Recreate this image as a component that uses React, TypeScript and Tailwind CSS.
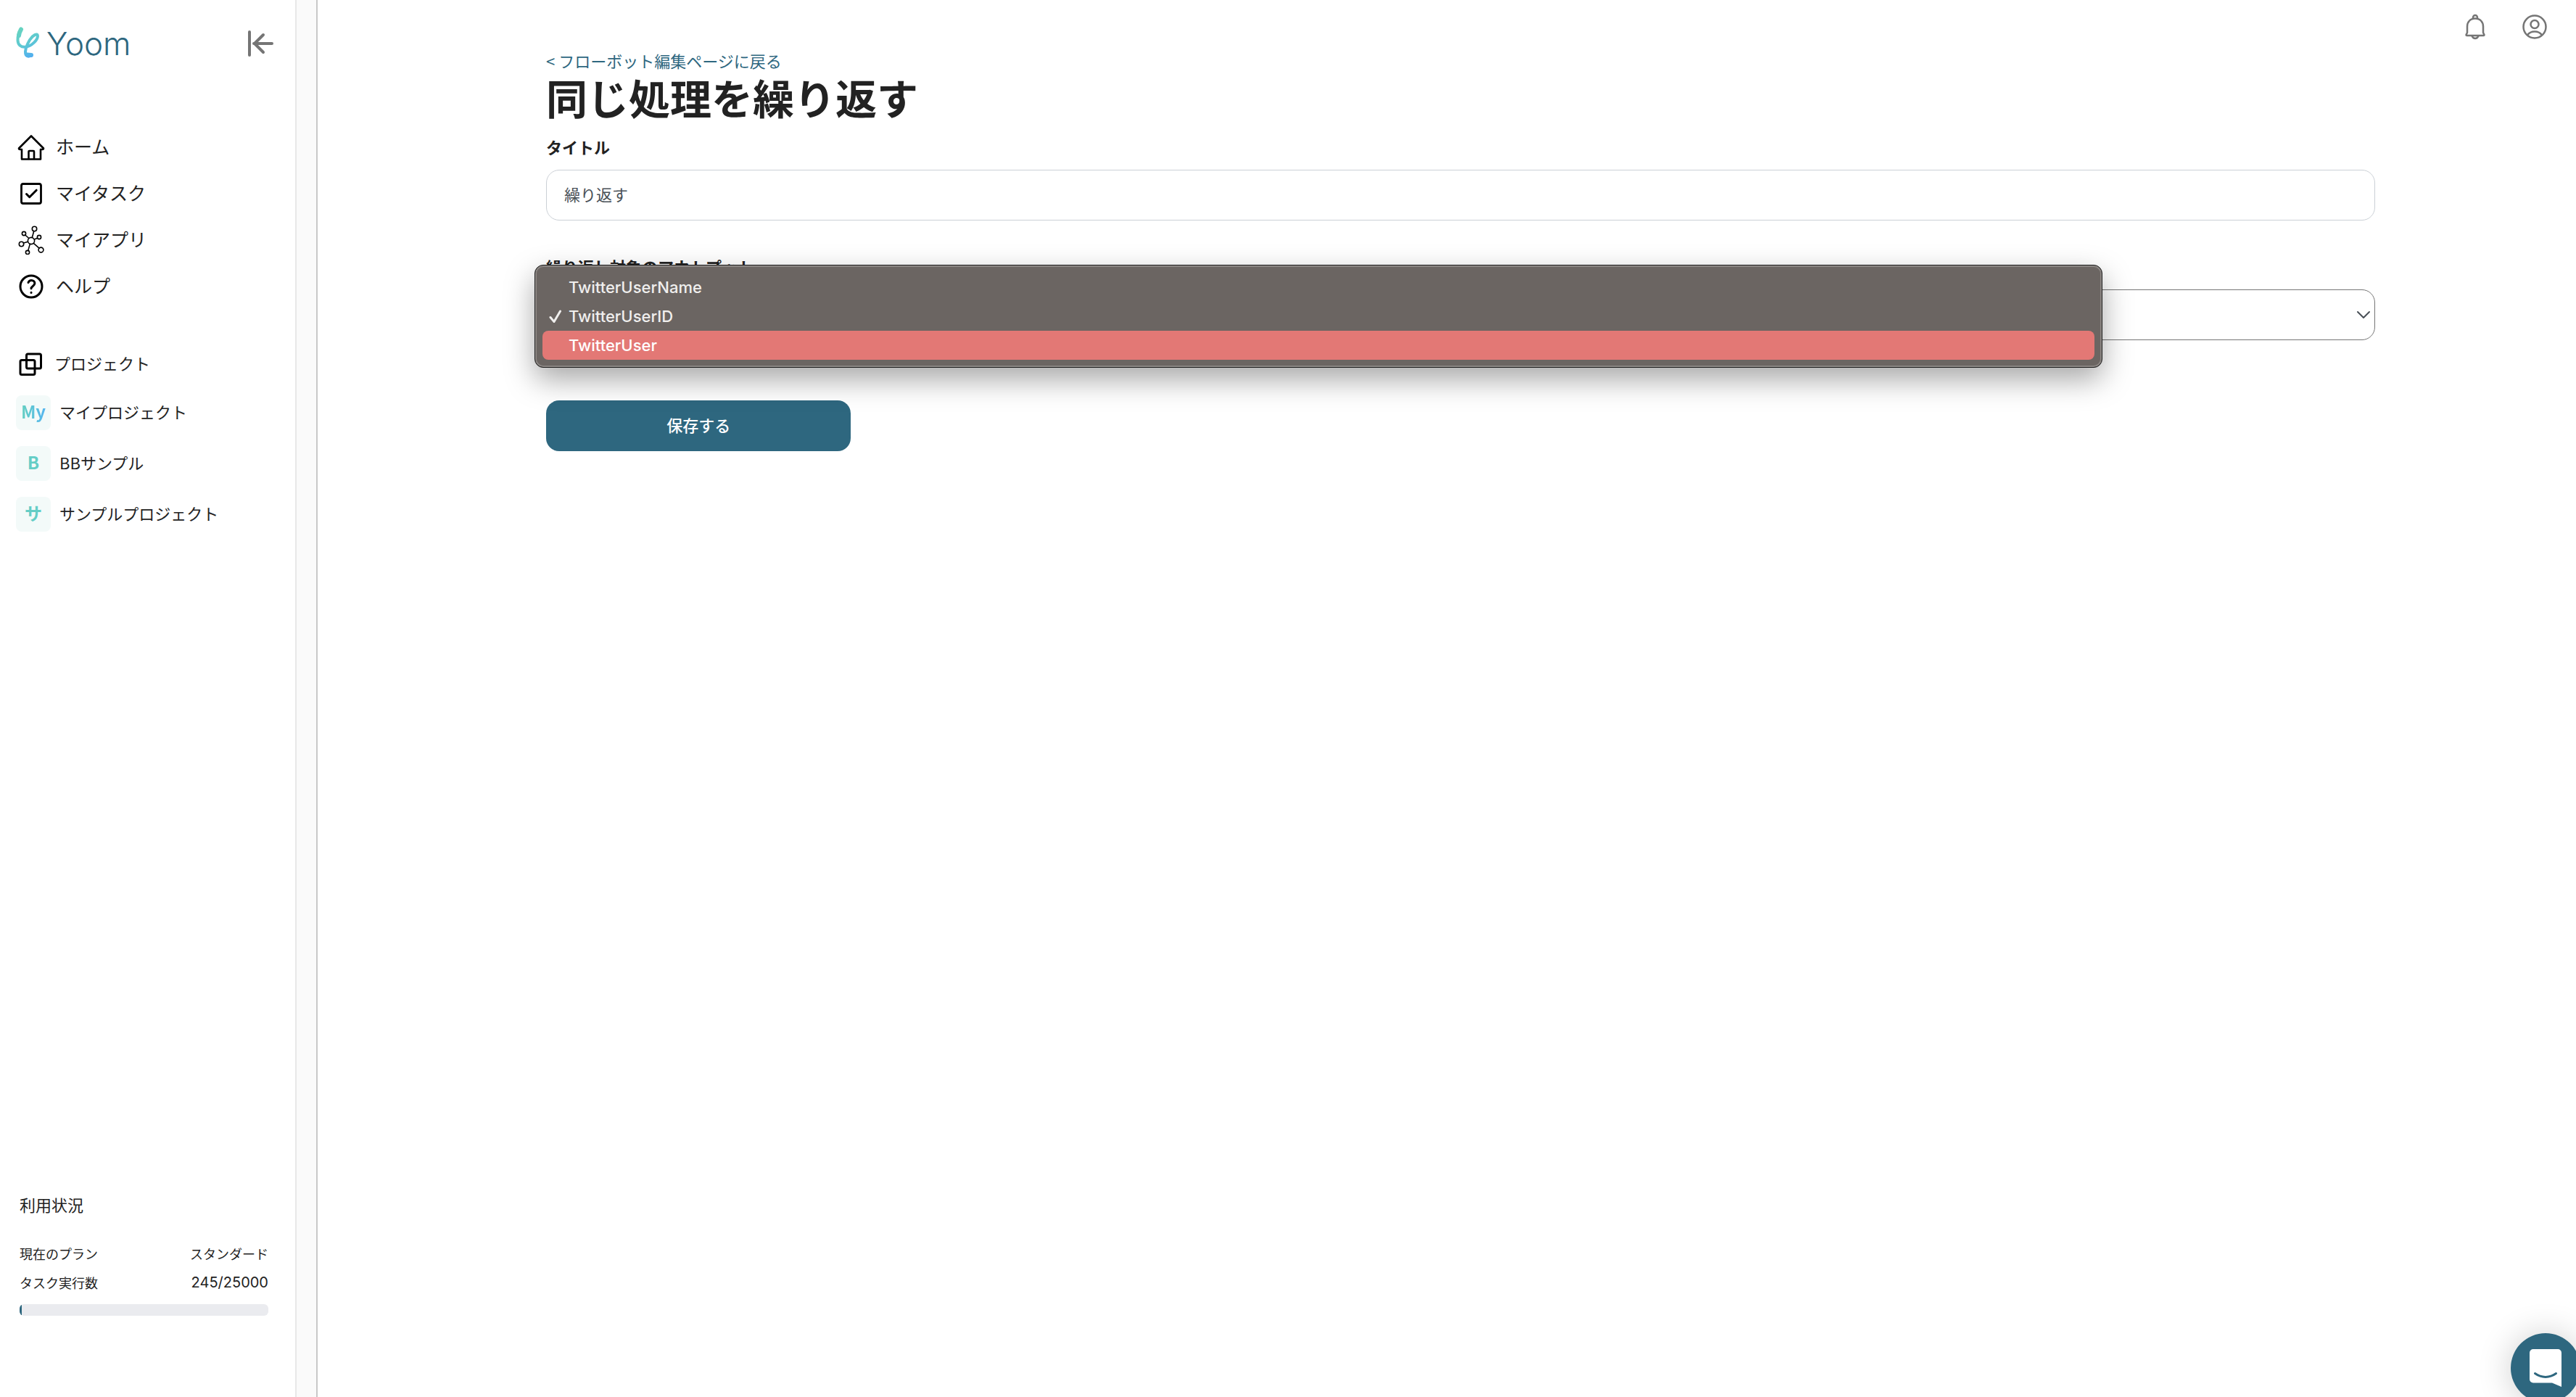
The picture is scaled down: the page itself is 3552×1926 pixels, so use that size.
import type { ReactNode } from 'react';

const menu = [
  { label: 'ホーム', icon: <HomeIcon /> },
  { label: 'マイタスク', icon: <TaskIcon /> },
  { label: 'マイアプリ', icon: <AppsIcon /> },
  { label: 'ヘルプ', icon: <HelpIcon /> },
];

const projects = [
  { mark: 'My', name: 'マイプロジェクト' },
  { mark: 'B', name: 'BBサンプル' },
  { mark: 'サ', name: 'サンプルプロジェクト' },
];

const outputs = ['TwitterUserName', 'TwitterUserID', 'TwitterUser'];
const selected = 'TwitterUserID';
const hovered = 'TwitterUser';

const used = 245;
const limit = 25000;

function Icon({ children }: { children: ReactNode }) {
  return (
    <svg
      width="40"
      height="40"
      viewBox="0 0 40 40"
      fill="none"
      stroke="#000"
      strokeWidth="3"
      strokeLinecap="round"
      strokeLinejoin="round"
      aria-hidden="true"
    >
      {children}
    </svg>
  );
}

function HomeIcon() {
  return (
    <Icon>
      <path d="M20 4.5 3 21.5q0 1.5 1.5 1.5H7V36.5H33V23h2.5q1.5 0 1.5-1.5Z" strokeWidth="2.6" />
      <path d="M16.5 36V26q0-1 1-1h5.5q1 0 1 1v10" strokeWidth="2.6" />
    </Icon>
  );
}

function TaskIcon() {
  return (
    <Icon>
      <rect x="6.5" y="6.5" width="27" height="27" rx="2.5" strokeWidth="2.8" />
      <path d="m13.5 20.5 4.2 4.2 9.5-9.5" />
    </Icon>
  );
}

function AppsIcon() {
  return (
    <Icon>
      <g strokeWidth="1.6">
        <circle cx="20" cy="21" r="4.6" />
        <circle cx="24.5" cy="4.5" r="3.2" />
        <circle cx="10" cy="11" r="2.6" />
        <circle cx="31" cy="16" r="2.6" />
        <circle cx="6.5" cy="25.5" r="3.2" />
        <circle cx="15" cy="37" r="2.6" />
        <circle cx="33.5" cy="33.5" r="3.4" />
        <path d="m21.3 16.5 2.4-8.7M16.800 17.5l-5-4.5M24.4 19l4.2-1.8M15.5 22.3l-5.9 1.8M18.3 25.4l-2.5 9M23.3 24.4l7.7 6.8" />
      </g>
    </Icon>
  );
}

function HelpIcon() {
  return (
    <Icon>
      <circle cx="20" cy="20" r="15" />
      <path d="M16 14.5c.8-2 2.3-3 4.3-3 2.7 0 4.6 1.7 4.6 4.1 0 3.7-4.9 3.9-4.9 7.2" />
      <path d="M20 28.3v.1" />
    </Icon>
  );
}

function ProjectsIcon() {
  return (
    <Icon>
      <rect x="13.5" y="6" width="20" height="20" rx="2" />
      <rect x="5" y="14.5" width="20" height="20" rx="2" />
    </Icon>
  );
}

function Logo() {
  return (
    <a href="#" className="flex items-center gap-2">
      <svg width="34" height="46" viewBox="0 0 34 46" fill="none" aria-hidden="true">
        <defs>
          <linearGradient id="mark" x1="4" y1="4" x2="24" y2="44" gradientUnits="userSpaceOnUse">
            <stop offset="0" stopColor="#66d3c0" />
            <stop offset="0.5" stopColor="#5dc8d3" />
            <stop offset="1" stopColor="#4fa9f5" />
          </linearGradient>
        </defs>
        <g stroke="url(#mark)" strokeLinecap="round" strokeLinejoin="round">
          <path d="M7 4C3.5 8 2.3 13 2.5 18.5 2.7 25 7 28.3 13 27.8 21.5 27 30 18 30 12.5 29.8 8 23 11.5 19 18 15.5 24 13.5 29 13 34 12.8 40 16 42 20.5 39.8" strokeWidth="4" />
          <path d="M7 3.5C5.5 6 4.5 8.5 4 12M15.5 38.5 21 39" strokeWidth="6" />
        </g>
      </svg>
      <span className="font-[Inter] text-[44px] leading-[46px] font-light text-[#2e677f]">Yoom</span>
    </a>
  );
}

function Sidebar() {
  return (
    <aside className="flex w-[409px] shrink-0 flex-col border-r-2 border-[#e8e8e8] pb-28">
      <div className="flex h-[120px] items-center justify-between pr-7 pl-[22px]">
        <Logo />
        <button type="button" aria-label="メニューを閉じる">
          <svg width="40" height="40" viewBox="0 0 40 40" fill="none" stroke="#757575" strokeWidth="4" strokeLinecap="round" strokeLinejoin="round">
            <path d="M5 4v32M11 20h25M24 8 12 20l12 12" />
          </svg>
        </button>
      </div>

      <nav className="mt-[51px]">
        {menu.map((item) => (
          <a key={item.label} href="#" className="flex h-16 items-center gap-3.5 pl-[23px] text-[25px]">
            {item.icon}
            <span className="pb-0.5">{item.label}</span>
          </a>
        ))}
      </nav>

      <div className="mt-[43px] flex h-16 items-center gap-3 pl-[23px] text-[22px]">
        <ProjectsIcon />
        <span className="pb-1">プロジェクト</span>
      </div>
      <ul>
        {projects.map((project) => (
          <li key={project.name}>
            <a href="#" className="flex h-[70px] items-center gap-3 pl-[22px] text-[22px]">
              <span className="flex size-12 items-center justify-center rounded-lg bg-[#f3faf9] pb-1 text-2xl font-bold">
                <span
                  className={
                    project.mark.length > 1
                      ? 'bg-linear-to-r from-[#66d0c0] to-[#55b4f0] bg-clip-text text-transparent'
                      : 'text-[#64cdc6]'
                  }
                >
                  {project.mark}
                </span>
              </span>
              <span className="pb-1">{project.name}</span>
            </a>
          </li>
        ))}
      </ul>

      <section className="mt-auto pr-[37px] pl-[27px] text-lg">
        <h2 className="mb-7 text-[22px] leading-10">利用状況</h2>
        <dl className="leading-10">
          <div className="flex justify-between">
            <dt>現在のプラン</dt>
            <dd>スタンダード</dd>
          </div>
          <div className="flex justify-between">
            <dt>タスク実行数</dt>
            <dd className="font-[Inter] text-xl leading-10">
              {used}/{limit}
            </dd>
          </div>
        </dl>
        <div className="mt-2.5 h-4 overflow-hidden rounded-md bg-[#eaebef]">
          <div className="h-full bg-[#2e677f]" style={{ width: `${(used / limit) * 100}%` }} />
        </div>
      </section>
    </aside>
  );
}

function TopBar() {
  return (
    <header className="flex h-[69px] items-center justify-end gap-[42px] pt-1 pr-[37px]">
      <button type="button" aria-label="お知らせ">
        <svg width="40" height="40" viewBox="0 0 40 40" fill="none" stroke="#757575" strokeWidth="2.5" strokeLinejoin="round">
          <path d="M20 8.5c-7 0-11 5-11 11V28l-1.5 3q0 1 1 1h23q1 0 1-1L31 28v-8.5c0-6-4-11-11-11Z" />
          <path d="M17 8.5V7a3 3 0 0 1 6 0v1.5M15.5 32.5q1.5 3.5 4.5 3.5t4.5-3.5" />
        </svg>
      </button>
      <button type="button" aria-label="アカウント">
        <svg width="40" height="40" viewBox="0 0 40 40" fill="none" stroke="#757575" strokeWidth="2.5">
          <circle cx="20" cy="20" r="15.5" />
          <circle cx="20" cy="16.5" r="5.5" />
          <path d="M10 31.5c2-3 6-5 10-5s8 2 10 5" />
        </svg>
      </button>
    </header>
  );
}

function OutputMenu() {
  return (
    <ul
      role="listbox"
      aria-label="繰り返し対象のアウトプット"
      className="absolute -top-[34px] -left-4 w-6/7 rounded-xl border border-[#1c1c1c] bg-[#6b6562] px-2.5 py-2.5 font-[Inter] text-[22px] leading-10 font-medium text-[#f0efee] shadow-[0_16px_40px_rgba(0,0,0,0.35)] inset-ring-2 inset-ring-[#8b8683]"
    >
      {outputs.map((name) => (
        <li
          key={name}
          role="option"
          aria-selected={name === selected}
          className={
            name === hovered
              ? 'flex h-10 items-center gap-2 rounded-lg bg-[#e37875] pl-2 text-white'
              : 'flex h-10 items-center gap-2 pl-2'
          }
        >
          <svg width="20" height="20" viewBox="0 0 20 20" fill="none" stroke="currentColor" strokeWidth="3" strokeLinecap="round" strokeLinejoin="round" aria-hidden="true">
            {name === selected && <path d="m3 11.5 5 6L16.5 3" />}
          </svg>
          {name}
        </li>
      ))}
    </ul>
  );
}

function LoopForm() {
  return (
    <form className="flex flex-col">
      <label htmlFor="title" className="mt-3 mb-3 text-[22px] leading-10 font-bold">
        タイトル
      </label>
      <input
        id="title"
        type="text"
        defaultValue="繰り返す"
        className="h-[70px] rounded-[18px] border border-[#cbd0d6] px-6 pb-1 text-[22px] text-[#495057]"
      />

      <label htmlFor="output" className="mt-[43px] mb-3 text-[22px] leading-10 font-bold">
        繰り返し対象のアウトプット
      </label>
      <div className="relative">
        <select
          id="output"
          defaultValue={selected}
          className="h-[70px] w-full appearance-none rounded-[18px] border border-[#757575] bg-white px-6 text-[22px] text-[#495057]"
        >
          {outputs.map((name) => (
            <option key={name}>{name}</option>
          ))}
        </select>
        <svg className="pointer-events-none absolute top-6 right-1" width="24" height="24" viewBox="0 0 24 24" fill="none" stroke="#495057" strokeWidth="2" strokeLinecap="round" strokeLinejoin="round" aria-hidden="true">
          <path d="m4 7 8 8 8-8" />
        </svg>
        <OutputMenu />
      </div>

      <button type="submit" className="mt-[83px] h-[70px] w-1/6 rounded-[18px] bg-[#2e677f] pb-1 text-[22px] font-medium text-white">
        保存する
      </button>
    </form>
  );
}

function Messenger() {
  return (
    <button
      type="button"
      aria-label="チャットを開く"
      className="fixed -right-1.5 -bottom-2 flex size-24 items-center justify-center rounded-full bg-[#2e677f] shadow-[0_2px_48px_rgba(0,0,0,0.2)]"
    >
      <svg width="44" height="52" viewBox="0 0 44 52" fill="none">
        <path d="M5 0h34a5 5 0 0 1 5 5v47l-13-5.5H5a5 5 0 0 1-5-5V5a5 5 0 0 1 5-5Z" fill="#fff" />
        <path d="M7.5 33.5c9 6.5 20 6.5 29 0" stroke="#2e677f" strokeWidth="3" strokeLinecap="round" />
      </svg>
    </button>
  );
}

export default function App() {
  return (
    <div className="flex min-h-screen overflow-hidden bg-white font-[Noto_Sans_CJK_JP,sans-serif] text-[#222]">
      <Sidebar />
      <div className="w-[29px] shrink-0 border-r-2 border-[#c8c8c8] bg-[#fafafa]" />
      <div className="flex-1">
        <TopBar />
        <main className="pr-[277px] pl-[315px]">
          <a href="#" className="block text-[22px] leading-7 text-[#2e677f]">
            &lt; フローボット編集ページに戻る
          </a>
          <h1 className="text-[57px] leading-[73px] font-bold">同じ処理を繰り返す</h1>
          <LoopForm />
        </main>
      </div>
      <Messenger />
    </div>
  );
}
